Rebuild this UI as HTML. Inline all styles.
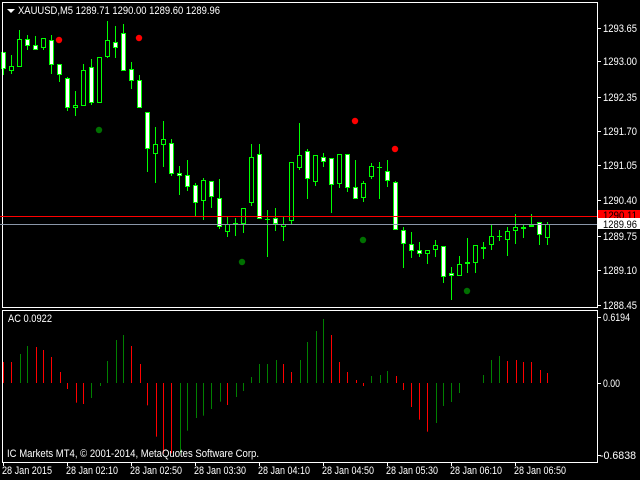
<!DOCTYPE html>
<html><head><meta charset="utf-8"><style>
html,body{margin:0;padding:0;background:#000;width:640px;height:480px;overflow:hidden}
svg{display:block}
text{font-family:"Liberation Sans",sans-serif;font-size:11px;fill:#fff}
</style></head><body>
<svg id="s" width="640" height="480" viewBox="0 0 640 480" xmlns="http://www.w3.org/2000/svg">
<rect width="640" height="480" fill="#000"/>
<g id="g"></g>
<rect x="2.5" y="2.5" width="595" height="305" fill="none" stroke="#fff"/>
<rect x="2.5" y="310.5" width="595" height="152" fill="none" stroke="#fff"/>
<line x1="0" y1="216.5" x2="597" y2="216.5" stroke="#ff0000"/>
<line x1="0" y1="224.5" x2="597" y2="224.5" stroke="#8a96a8"/>
<polygon points="7,9 15,9 11,13" fill="#fff"/>
<text x="18" y="14" textLength="202" lengthAdjust="spacingAndGlyphs">XAUUSD,M5  1289.71 1290.00 1289.60 1289.96</text>
<g id="ax"></g>
<g id="pl"></g>
<rect x="598" y="210" width="42" height="9" fill="#ff0000"/>
<text x="603" y="219" textLength="34" lengthAdjust="spacingAndGlyphs" style="fill:#000">1290.11</text>
<rect x="598" y="218" width="42" height="11" fill="#fff"/>
<text x="603" y="228" textLength="34" lengthAdjust="spacingAndGlyphs" style="fill:#000">1289.96</text>
<text x="603" y="321" textLength="27" lengthAdjust="spacingAndGlyphs">0.6194</text>
<text x="603" y="387" textLength="17" lengthAdjust="spacingAndGlyphs">0.00</text>
<text x="600" y="459" textLength="36" lengthAdjust="spacingAndGlyphs">-0.6838</text>
<text x="8" y="322" textLength="44" lengthAdjust="spacingAndGlyphs">AC 0.0922</text>
<text x="7" y="457" textLength="252" lengthAdjust="spacingAndGlyphs">IC Markets MT4, © 2001-2014, MetaQuotes Software Corp.</text>
<g id="tl"></g>
</svg>
<script>
var NS="http://www.w3.org/2000/svg",g=document.getElementById("g"),ax=document.getElementById("ax");
function el(p,t,a,txt){var e=document.createElementNS(NS,t);for(var k in a)e.setAttribute(k,a[k]);if(txt)e.textContent=txt;p.appendChild(e);return e;}
var C=[[52,69,52,75,1],[66,71,55,74,0],[39,67,30,67,0],[39,46,35,50,1],[45,50,36,50,1],[38,48,38,50,0],[40,65,35,74,1],[64,75,64,82,1],[78,108,77,111,1],[105,108,91,116,0],[70,106,64,106,0],[67,103,59,105,1],[57,103,57,103,0],[40,57,21,58,0],[42,48,26,58,1],[33,71,24,71,1],[69,81,62,89,1],[80,108,75,108,1],[112,149,112,172,1],[144,154,127,183,0],[139,145,121,167,0],[143,174,139,176,1],[173,176,166,195,1],[175,187,160,191,1],[185,203,183,216,1],[180,201,178,220,0],[181,197,181,208,1],[198,227,179,229,1],[224,232,216,237,0],[223,223,218,236,2],[208,224,208,233,0],[157,203,144,206,0],[154,219,144,219,1],[219,219,210,257,2],[218,224,208,231,1],[224,227,216,241,0],[162,221,162,224,0],[155,168,123,170,0],[151,179,149,199,1],[155,182,155,186,0],[157,162,153,167,1],[158,185,158,213,1],[154,184,154,188,0],[154,188,154,192,1],[187,199,160,199,1],[183,198,181,202,0],[166,177,163,179,0],[167,167,162,199,2],[171,181,160,187,1],[182,230,181,230,1],[230,244,227,268,1],[244,251,232,258,1],[250,254,242,257,1],[250,254,250,264,0],[245,250,240,257,0],[246,277,246,283,1],[273,276,267,300,1],[264,276,256,276,0],[262,264,238,273,0],[245,263,245,273,0],[247,249,242,259,0],[236,245,224,250,0],[236,236,230,241,2],[231,240,227,256,0],[227,231,214,244,0],[227,229,224,238,1],[225,227,214,227,0],[222,235,222,245,1],[224,238,222,245,0]];
C.forEach(function(c,i){var x=Math.round(3.3+8*i);
 el(g,"rect",{x:x,y:c[2],width:1,height:Math.max(1,c[3]-c[2]),fill:"#00ff00"});
 if(c[4]==2){el(g,"rect",{x:x-2,y:c[0],width:5,height:1,fill:"#00ff00"});}
 else{el(g,"rect",{x:x-2,y:c[0],width:5,height:Math.max(2,c[1]-c[0]),fill:"#00ff00"});
  if(c[1]-c[0]>2)el(g,"rect",{x:x-1,y:c[0]+1,width:3,height:c[1]-c[0]-2,fill:c[4]?"#fff":"#000"});}
});
[[59,40],[139,38],[355,121],[395,149]].forEach(function(p){el(g,"circle",{cx:p[0],cy:p[1],r:3.2,fill:"#ff0000"})});
[[99,130],[242,262],[363,240],[467,291]].forEach(function(p){el(g,"circle",{cx:p[0],cy:p[1],r:3.2,fill:"#007000"})});
var A=[[8,186,"R"],[28,186,"R"],[48,162,"G"],[67,138,"G"],[87,141,"R"],[106,150,"R"],[126,171,"R"],[146,216,"R"],[165,267,"R"],[185,308,"R"],[204,312,"R"],[224,294,"G"],[244,258,"G"],[263,183,"G"],[283,120,"G"],[302,105,"G"],[322,138,"R"],[342,192,"R"],[361,316,"R"],[381,410,"R"],[400,460,"R"],[420,460,"R"],[440,460,"G"],[459,392,"G"],[479,354,"G"],[498,347,"G"],[518,327,"G"],[538,305,"G"],[557,315,"R"],[577,291,"G"],[596,273,"G"],[616,231,"G"],[635,192,"G"],[655,192,"G"],[675,180,"G"],[694,192,"R"],[714,216,"R"],[734,180,"G"],[753,126,"G"],[773,93,"G"],[792,57,"G"],[812,105,"R"],[831,186,"R"],[851,216,"R"],[871,240,"R"],[890,258,"R"],[910,228,"G"],[930,225,"G"],[949,213,"G"],[969,228,"R"],[988,270,"R"],[1008,321,"R"],[1027,359,"R"],[1047,395,"R"],[1067,369,"G"],[1086,318,"G"],[1106,306,"G"],[1125,279,"G"],[1184,225,"G"],[1204,180,"G"],[1223,168,"G"],[1243,183,"R"],[1263,180,"R"],[1282,186,"R"],[1302,186,"R"],[1322,210,"R"],[1341,219,"R"]];
var z=383;
A.forEach(function(a){var x=Math.round(a[0]/2.45),y=300+a[1]/3;
 el(g,"rect",{x:x,y:Math.min(y,z),width:1,height:Math.max(1,Math.abs(y-z)),fill:a[2]=="R"?"#ff0000":"#008000"});});
[28,61,97,131,165,200,236,270,305,317,383,455].forEach(function(y){el(ax,"rect",{x:597,y:y,width:4,height:1,fill:"#fff"})});
[3,67,131,195,259,323,387,451,515].forEach(function(x){el(ax,"rect",{x:x,y:462,width:1,height:4,fill:"#fff"})});
var pl=document.getElementById("pl");
[["1293.65",32],["1293.00",65],["1292.35",101],["1291.70",135],["1291.05",169],["1290.40",204],["1289.75",240],["1289.10",274],["1288.45",309]].forEach(function(p){
 el(pl,"text",{x:603,y:p[1],textLength:34,lengthAdjust:"spacingAndGlyphs"},p[0]);});
var tl=document.getElementById("tl");
[["28 Jan 2015",2,50],["28 Jan 02:10",66,52],["28 Jan 02:50",130,52],["28 Jan 03:30",194,52],["28 Jan 04:10",258,52],["28 Jan 04:50",322,52],["28 Jan 05:30",386,52],["28 Jan 06:10",450,52],["28 Jan 06:50",514,52]].forEach(function(t){
 el(tl,"text",{x:t[1],y:474,textLength:t[2],lengthAdjust:"spacingAndGlyphs"},t[0]);});
</script>
</body></html>
